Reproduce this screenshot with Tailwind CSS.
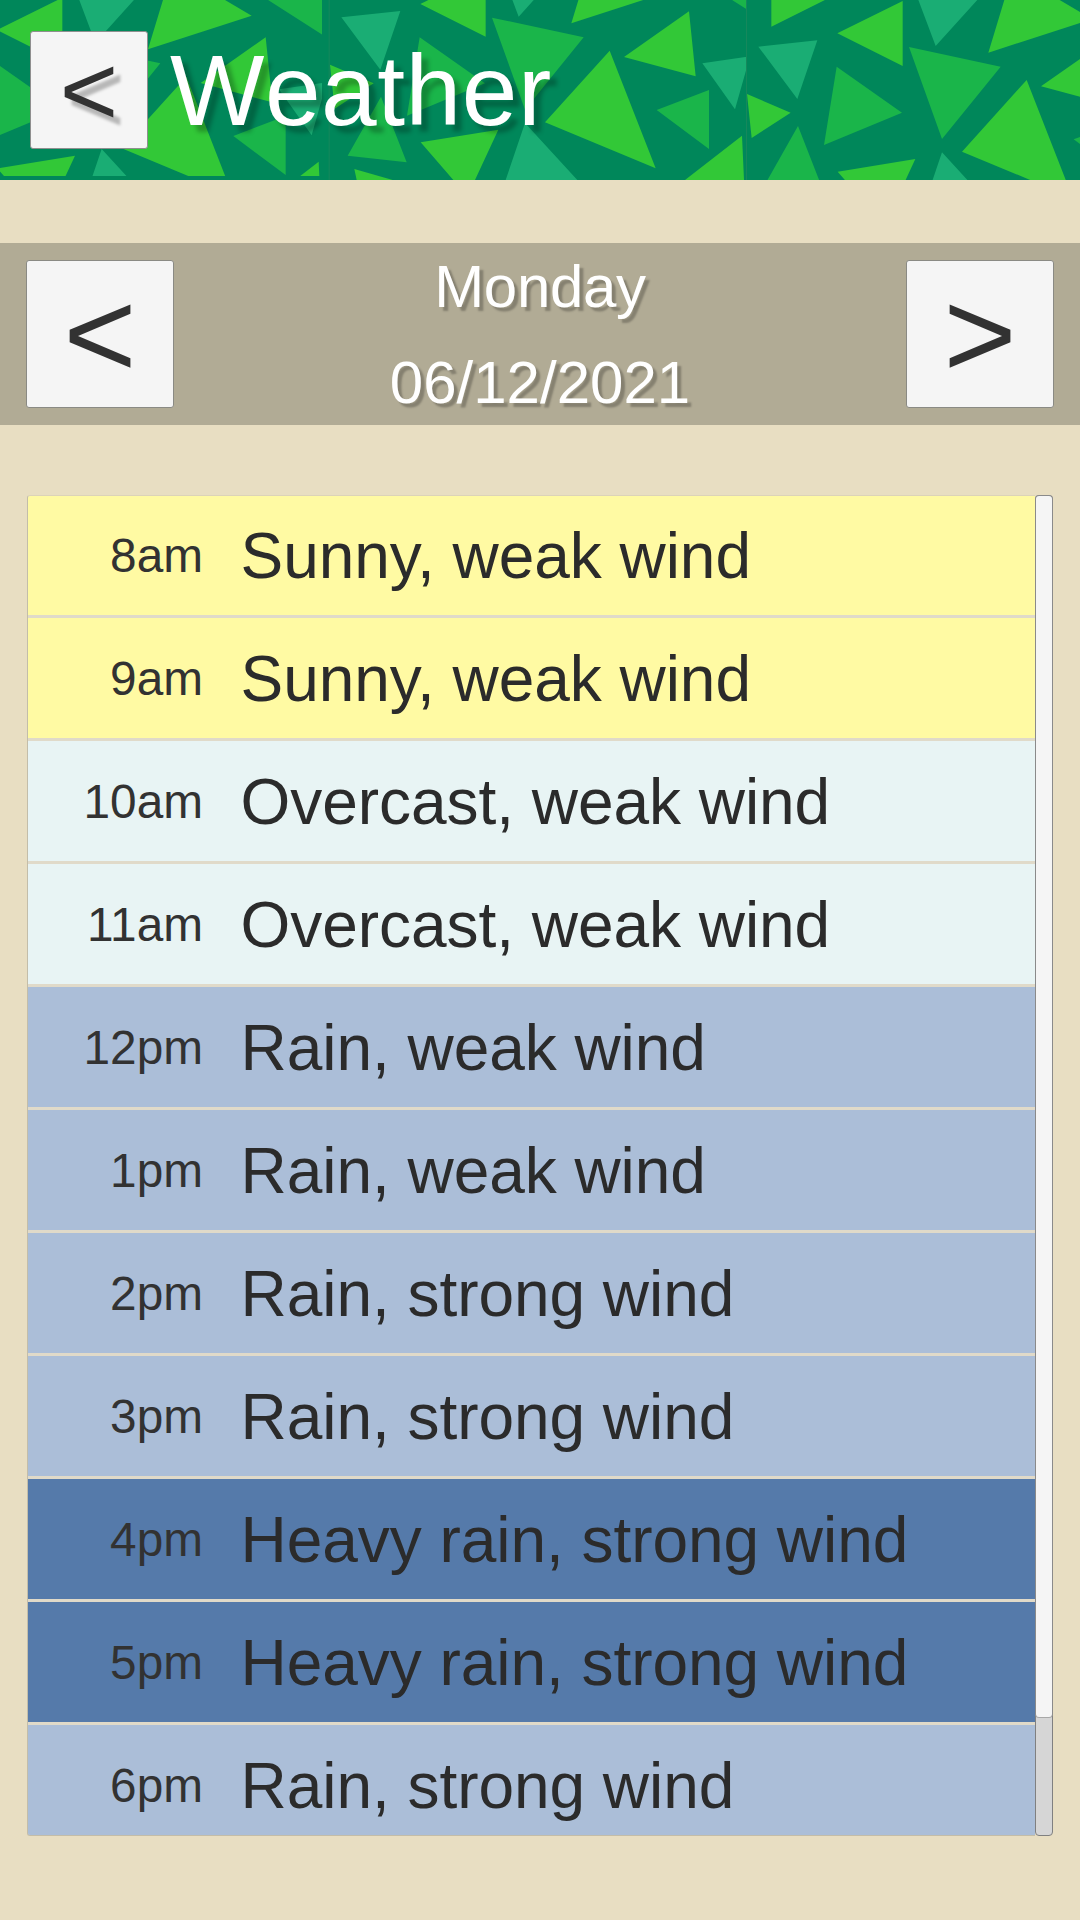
<!DOCTYPE html>
<html lang="en">
<head>
<meta charset="utf-8">
<title>Weather</title>
<script src="https://cdn.jsdelivr.net/npm/@tailwindcss/browser@4"></script>
</head>
<body class="w-[1080px] h-[1920px] overflow-hidden bg-[#e8dec2] font-['Liberation_Sans',Arial,sans-serif] text-[#323232]">
<header class="relative h-[180px] bg-[#00875a] overflow-hidden">
  <svg class="absolute inset-0" width="1080" height="180" viewBox="0 0 3240 540">
    <defs>
      <g id="tile">
        <path fill="#32c837" d="M73 80L274-20H73ZM0 282L131 338L14 414ZM271 100L467 3V198ZM724 158L775-10H921L1035 57ZM882 259L1077 122L1097 317ZM839 240L645 455L977 593ZM272 515L505 477L435 628H370ZM73 595L188 628H80ZM1065 628L1236 495L1242 628Z"/>
        <path fill="#1ab54a" d="M269 200L465 338L231 435ZM486 141L761 200L585 417ZM1053-10L1250 116V-10ZM153 378L53 555L230 575ZM980 418L1137 358V535Z"/>
        <path fill="#1aad74" d="M34 140L211 121L151 297ZM499-40H727L566 138ZM585 457L527 628H742ZM1117 278L1260 257L1215 416Z"/>
      </g>
      <clipPath id="c1"><path d="M0 0H966V528H0Z"/></clipPath>
      <clipPath id="c2"><path d="M988 0H2241V540H988Z"/></clipPath>
      <clipPath id="c3"><path d="M2241 0H3240V540H2241Z"/></clipPath>
    </defs>
    <g clip-path="url(#c1)"><use href="#tile" x="-280" y="-10"/></g>
    <g clip-path="url(#c2)"><use href="#tile" x="990" y="-88"/></g>
    <g clip-path="url(#c3)"><use href="#tile" x="2241" y="0"/></g>
    <path fill="#16885c" d="M986 0h3V540h-3ZM2238 0h3V540h-3Z"/>
  </svg>
  <div class="relative flex h-full items-center pl-[30px]">
    <button class="w-[118px] h-[118px] rounded-[3px] bg-[#f5f5f5] border border-[#8f8f8f] text-[100px] leading-[116px] [text-shadow:7px_8px_3px_rgba(0,0,0,0.25)]">&lt;</button>
    <h1 class="pl-[22px] text-[100px] leading-[180px] tracking-[0.55px] text-white [font-kerning:none] [text-shadow:7px_7px_4px_rgba(0,0,0,0.25)]">Weather</h1>
  </div>
</header>

<nav class="mt-[63px] flex h-[182px] items-start justify-between bg-[#b1ab95] px-[26px] pt-[17px]">
  <button class="w-[148px] h-[148px] rounded-[3px] bg-[#f5f5f5] border border-[#8a8a84] text-[125px] leading-[146px]">&lt;</button>
  <div class="text-center text-[60px] leading-[96px] text-white -mt-[21px] [text-shadow:4px_4px_2px_rgba(0,0,0,0.25)]">
    <p class="tracking-[-0.3px]">Monday</p>
    <p>06/12/2021</p>
  </div>
  <button class="w-[148px] h-[148px] rounded-[3px] bg-[#f5f5f5] border border-[#8a8a84] text-[125px] leading-[146px]">&gt;</button>
</nav>

<main class="mt-[70px] ml-[27px] flex h-[1341px] w-[1026px]">
  <ul id="hours" class="h-full w-[1008px] overflow-hidden rounded-l-[3px] border border-r-0 border-[#c3bda9] border-t-[#dcd3b9] bg-[#e0dac9]"></ul>
  <div class="h-full w-[18px] rounded-[4px] border border-[#808080] bg-[#d6d6d6]">
    <div class="-mx-px -mt-px h-[1223px] rounded-[4px] border border-[#8a8a8a] border-b-[#a8a8a8] bg-[#f5f5f5]"></div>
  </div>
</main>

<script>
const tones = {
  sun: 'bg-[#fffaa3]',
  cloud: 'bg-[#e8f4f4]',
  rain: 'bg-[#abbed8]',
  heavy: 'bg-[#557aaa]'
};
const hours = [
  ['8am', 'Sunny, weak wind', 'sun'],
  ['9am', 'Sunny, weak wind', 'sun'],
  ['10am', 'Overcast, weak wind', 'cloud'],
  ['11am', 'Overcast, weak wind', 'cloud'],
  ['12pm', 'Rain, weak wind', 'rain'],
  ['1pm', 'Rain, weak wind', 'rain'],
  ['2pm', 'Rain, strong wind', 'rain'],
  ['3pm', 'Rain, strong wind', 'rain'],
  ['4pm', 'Heavy rain, strong wind', 'heavy'],
  ['5pm', 'Heavy rain, strong wind', 'heavy'],
  ['6pm', 'Rain, strong wind', 'rain']
];
document.getElementById('hours').innerHTML = hours.map(([time, text, tone], i) => `
  <li class="flex items-center ${i ? 'h-[120px] pt-px' : 'h-[119px]'} mb-[3px] ${tones[tone]}">
    <span class="w-[175px] text-right text-[47.75px] leading-[118px]">${time}</span>
    <span class="pl-[37.5px] text-[64px] leading-[118px] tracking-[-0.04px] text-[#2b2b2b] whitespace-nowrap">${text}</span>
  </li>`).join('');
</script>
</body>
</html>
